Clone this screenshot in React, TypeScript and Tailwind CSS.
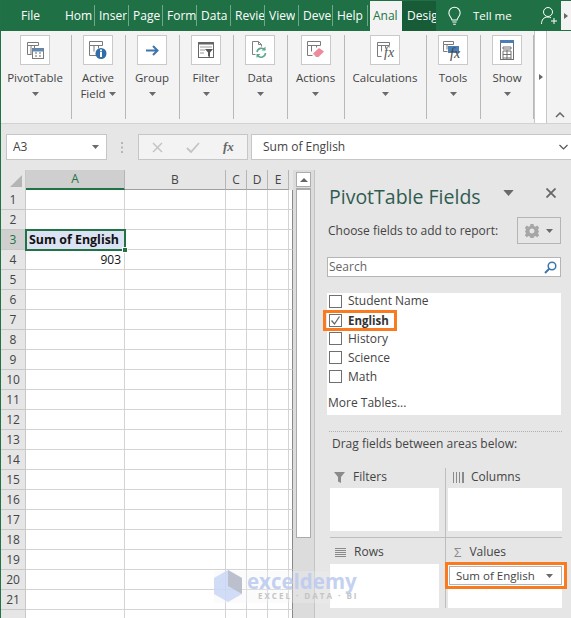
import React from "react";

const font = { fontFamily: '"Open Sans", "Noto Sans", sans-serif' };

const Caret = ({ className = "" }: { className?: string }) => (
  <svg width="7" height="4" viewBox="0 0 7 4" className={className}><path d="M0 0h7L3.5 4z" fill="#6a6a6a" /></svg>
);

const tabs = [
  { t: "File", w: "w-[60px]", pl: "pl-[21px]" },
  { t: "Hom", w: "w-[35px]", pl: "pl-[5px]" },
  { t: "Inser", w: "w-[34px]", pl: "pl-[4px]" },
  { t: "Page", w: "w-[34px]", pl: "pl-[4px]" },
  { t: "Form", w: "w-[34px]", pl: "pl-[4px]" },
  { t: "Data", w: "w-[34px]", pl: "pl-[4px]" },
  { t: "Revie", w: "w-[34px]", pl: "pl-[4px]" },
  { t: "View", w: "w-[34px]", pl: "pl-[4px]" },
  { t: "Deve", w: "w-[34px]", pl: "pl-[4px]" },
  { t: "Help", w: "w-[35px]", pl: "pl-[4px]" },
];

const IconPivot = () => (
  <svg width="18" height="18" viewBox="0 0 18 18" fill="none">
    <path d="M1.5 1.5h11v3h-11zM1.5 4.5v9h4M5 4.500v9M8.500 4.500v3" stroke="#7a7a7a" />
    <rect x="6.500" y="7.500" width="11" height="10" fill="#fff" stroke="#7a7a7a" />
    <rect x="6.500" y="7.500" width="11" height="3" fill="#5f8ab8" />
    <path d="M9 12h2M13 12h2M9 15h2M13 15h2" stroke="#666" />
  </svg>
);
const IconActive = () => (
  <svg width="18" height="18" viewBox="0 0 18 18" fill="none">
    <path d="M.5.500h13v4H.5zM.5 4.500v10h7M5 4.500v6M9.500 4.500v3" stroke="#7a7a7a" />
    <circle cx="12" cy="12.500" r="5.500" fill="#2f6ea8" />
    <rect x="11" y="11" width="2" height="5" fill="#fff" />
    <rect x="11" y="8.500" width="2" height="1.800" fill="#fff" />
  </svg>
);
const IconGroup = () => (
  <svg width="13" height="11" viewBox="0 0 13 11" fill="none">
    <path d="M0 5.500h11M7 1l4.500 4.500L7 10" stroke="#3f75ad" strokeWidth="2" />
  </svg>
);
const IconFilter = () => (
  <svg width="16" height="16" viewBox="0 0 16 16" fill="none">
    <rect x=".5" y=".5" width="15" height="15" fill="#fff" stroke="#666" />
    <rect x="0" y="0" width="16" height="2.500" fill="#666" />
    <path d="M2 5h12M2 8h5M2 11h4" stroke="#9a9a9a" />
    <path d="M7 7h8l-3 3.500V15l-2-.8v-3.700z" fill="#555" />
  </svg>
);
const IconData = () => (
  <svg width="18" height="19" viewBox="0 0 18 19" fill="none">
    <path d="M4.500 13.500H1.500v-13h6l3 3v2M7.500.5v3h3" stroke="#808080" />
    <path d="M6 11a4.500 4.500 0 0 1 8-2M14.500 12a4.500 4.500 0 0 1-8 2.500" stroke="#5fa690" strokeWidth="1.600" />
    <path d="M14.500 5.500v4h-4zM5.500 17v-4h4z" fill="#5fa690" />
  </svg>
);
const IconActions = () => (
  <svg width="18" height="18" viewBox="0 0 18 18" fill="none">
    <path d="M.5.500h13v4H.5zM.5 4.500v10h5M4.500 4.500v6M9.500 4.500v2" stroke="#7a7a7a" />
    <path d="M6 12.500 12 7l5 3.500-5.500 5.500H9z" fill="#ee8a9b" />
    <path d="M6 12.500 9 16" stroke="#d9d9d9" />
  </svg>
);
const IconCalc = () => (
  <div className="relative w-[16px] h-[16px]">
    <svg width="13" height="15" viewBox="0 0 13 15" fill="none" className="absolute left-0 top-0">
      <path d="M.5.500h12v3H.5zM.5 3.500v11h4M4.500 3.500v6M8.500 3.500v3" stroke="#7a7a7a" />
    </svg>
    <span className="absolute left-[7px] top-[4px] text-[14px] leading-[14px] italic text-[#555]" style={{ fontFamily: '"Liberation Serif", serif' }}>fx</span>
  </div>
);
const IconTools = () => (
  <div className="relative w-[16px] h-[16px]">
    <svg width="16" height="12" viewBox="0 0 16 12" fill="none" className="absolute -left-[2px] -top-[1px]">
      <path d="M.5.500h10v3H.5zM.5 3.500v7h4M4 3.500v5" stroke="#7a7a7a" />
      <rect x="5" y="5" width="11" height="7" fill="#4a7eb5" />
    </svg>
    <span className="absolute left-[5px] top-[5px] text-[14px] leading-[14px] italic text-[#444]" style={{ fontFamily: '"Liberation Serif", serif' }}>fx</span>
  </div>
);
const IconShow = () => (
  <svg width="14" height="20" viewBox="0 0 14 20" fill="none">
    <rect x=".5" y=".5" width="13" height="19" fill="#fff" stroke="#707070" />
    <rect x="0" y="0" width="14" height="3" fill="#4a7eb5" />
    <path d="M3 7h8v2H3zM3 11h8M3 14.500h8M3 18h8M7 10v9M3 11v8M11 11v8" stroke="#707070" />
  </svg>
);

const groups: { w: string; label: string; second?: string; icon: React.ReactNode; extra?: string }[] = [
  { w: "w-[71px]", label: "PivotTable", icon: <IconPivot />, extra: "pr-[2px]" },
  { w: "w-[54px]", label: "Active", second: "Field", icon: <IconActive />, extra: "pr-px" },
  { w: "w-[54px]", label: "Group", icon: <IconGroup />, extra: "pr-px" },
  { w: "w-[54px]", label: "Filter", icon: <IconFilter />, extra: "pr-px" },
  { w: "w-[54px]", label: "Data", icon: <IconData />, extra: "pr-px" },
  { w: "w-[57px]", label: "Actions", icon: <IconActions />, extra: "pr-px" },
  { w: "w-[82px]", label: "Calculations", icon: <IconCalc />, extra: "pr-px" },
  { w: "w-[54px]", label: "Tools", icon: <IconTools />, extra: "pr-px" },
  { w: "w-[53px]", label: "Show", icon: <IconShow /> },
];

const rows = Array.from({ length: 22 }, (_, i) => i + 1);

const Check = ({ checked = false }: { checked?: boolean }) => (
  <span className="w-[13px] h-[13px] border border-[#6f6f6f] bg-white flex items-center justify-center shrink-0">
    {checked && (
      <svg width="11" height="11" viewBox="0 0 11 11" fill="none"><path d="M1.500 5.500 4.500 9 9.500 1.500" stroke="#666" strokeWidth="1.300" /></svg>
    )}
  </span>
);

const Field = ({ label, h = "h-[19px]" }: { label: string; h?: string }) => (
  <div className={`${h} pl-[2px] flex items-center gap-[6px] text-[12px] text-[#444]`}>
    <Check />
    <span>{label}</span>
  </div>
);

export default function App() {
  return (
    <div className="w-[571px] h-[618px] overflow-hidden relative bg-[#e6e6e6] border-l border-[#217346]" style={font}>
      {/* Title tabs */}
      <div className="h-[31px] bg-[#1f7145] flex items-stretch -ml-px text-[12px] text-white">
        {tabs.map((t, i) => (
          <div key={t.t} className={`${t.w} ${t.pl} h-[31px] flex items-center overflow-hidden whitespace-nowrap relative`}>
            <span className="overflow-hidden">{t.t}</span>
            {i > 0 && <span className="absolute right-0 top-[5px] h-[21px] w-px bg-[#6fa88a]" />}
          </div>
        ))}
        <div className="w-[2px]" />
        <div className="w-[32px] mt-px bg-[#f3f3f3] text-[#217346] pl-[3px] flex items-center overflow-hidden">Anal</div>
        <div className="w-[34px] mt-px bg-[#185c37] pl-[5px] flex items-center overflow-hidden">Desig</div>
        <div className="w-[12px]" />
        <svg width="13" height="20" viewBox="0 0 15 21" fill="none" className="self-center">
          <path d="M4.500 15C4 12 1 10.500 1 7a6.500 6.500 0 0 1 13 0c0 3.500-3 5-3.500 8zM5 17.500h5M6 20h3" stroke="#fff" strokeWidth="1.200" />
        </svg>
        <div className="w-[12px]" />
        <div className="w-[42px] flex items-center whitespace-nowrap text-[11.5px]">Tell me</div>
        <div className="w-[26px]" />
        <svg width="17" height="19" viewBox="0 0 17 19" fill="none" className="self-center">
          <circle cx="7" cy="6" r="4.500" stroke="#fff" />
          <path d="M.5 18c0-4 2-7 6.500-7 1 0 2 .2 3 .8M13 12v6M10 15h6" stroke="#fff" />
        </svg>
        <div className="flex-1 ml-[3px] mt-px mb-px bg-[#f3f3f3] flex items-center pl-[3px]"><span className="border-y-[3px] border-y-transparent border-l-[4px] border-l-[#666]" /></div>
      </div>

      {/* Ribbon */}
      <div className="h-[93px] bg-[#f3f3f3] border-b border-[#d2d2d2] flex pt-[4px] text-[11.5px] text-[#444] relative">
        {groups.map((g) => (
          <div key={g.label} className={`${g.w} ${g.extra ?? ""} h-[84px] border-r border-[#b8b8b8] flex flex-col items-center`}>
            <div className="w-[30px] h-[30px] border border-[#c9c9c9] bg-white flex items-center justify-center">{g.icon}</div>
            <div className="mt-[5px] leading-[16px] text-center whitespace-nowrap">{g.label}</div>
            {g.second ? (
              <div className="leading-[16px] flex items-center gap-[3px]">{g.second}<Caret /></div>
            ) : (
              <Caret className="mt-[6px]" />
            )}
          </div>
        ))}
        <div className="w-[13px] h-[92px] -mt-[4px] border-x border-[#c6c6c6] bg-white flex items-center justify-center">
          <span className="border-y-[3px] border-y-transparent border-l-[4px] border-l-[#666]" />
        </div>
        <svg width="10" height="6" viewBox="0 0 10 6" fill="none" className="absolute left-[554px] top-[81px]"><path d="M1 5l4-4 4 4" stroke="#666" strokeWidth="1.500" /></svg>
      </div>

      {/* Formula bar */}
      <div className="h-[39px] flex items-center -ml-px pl-[6px] pt-[7px] text-[12px] text-[#444]">
        <div className="w-[101px] h-[26px] border border-[#c6c6c6] bg-white flex items-center justify-between pl-[6px] pr-[7px]">
          <span>A3</span><Caret />
        </div>
        <div className="w-[31px] flex justify-center text-[#aaa]">
          <svg width="3" height="11" viewBox="0 0 3 11"><path d="M0 0h2v2H0zM0 4.500h2v2H0zM0 9h2v2H0z" fill="#b5b5b5" /></svg>
        </div>
        <div className="w-[110px] h-[26px] border border-[#c6c6c6] bg-[#f3f3f3] flex items-center pl-[13px] gap-[23px]">
          <svg width="11" height="11" viewBox="0 0 11 11" fill="none"><path d="M1 1l9 9M10 1l-9 9" stroke="#c4c4c4" strokeWidth="1.500" /></svg>
          <svg width="14" height="11" viewBox="0 0 14 11" fill="none"><path d="M1 6l4 4 8-9" stroke="#c4c4c4" strokeWidth="1.800" /></svg>
          <span className="text-[13px] italic font-bold text-[#666]" style={{ fontFamily: '"Liberation Serif", serif' }}>fx</span>
        </div>
        <div className="w-[3px]" />
        <div className="flex-1 h-[26px] border border-[#c6c6c6] border-r-0 bg-white flex items-center justify-between pl-[11px] pr-[3px]">
          <span>Sum of English</span>
          <svg width="9" height="6" viewBox="0 0 9 6" fill="none"><path d="M.5 1l4 4 4-4" stroke="#555" strokeWidth="1.200" /></svg>
        </div>
      </div>

      {/* Main */}
      <div className="flex h-[455px] pt-[7px] text-[12px]">
        {/* Sheet */}
        <div className="w-[292px] shrink-0 overflow-hidden">
          <div className="flex h-[20px] bg-[#e6e6e6] text-[#444]">
            <div className="w-[25px] relative border-r border-[#c8c8c8]">
              <span className="absolute right-[3px] bottom-[3px] border-b-[12px] border-b-[#b5b5b5] border-l-[12px] border-l-transparent" />
            </div>
            <div className="w-[99px] bg-[#cfcfcf] border-r border-[#b5b5b5] border-b-2 border-b-[#217346] flex items-center justify-center text-[#217346]">A</div>
            <div className="w-[101px] border-r border-[#b5b5b5] border-b border-b-[#9f9f9f] flex items-center justify-center">B</div>
            <div className="w-[21px] border-r border-[#b5b5b5] border-b border-b-[#9f9f9f] flex items-center justify-center">C</div>
            <div className="w-[21px] border-r border-[#b5b5b5] border-b border-b-[#9f9f9f] flex items-center justify-center">D</div>
            <div className="w-[21px] border-r border-[#b5b5b5] border-b border-b-[#9f9f9f] flex items-center justify-center">E</div>
          </div>
          {rows.map((r) => (
            <div key={r} className="flex h-[20px] bg-white">
              <div className={`w-[25px] shrink-0 pt-px border-r border-b border-[#c8c8c8] flex items-center justify-center ${r === 3 ? "bg-[#cfcfcf] text-[#217346]" : "bg-[#e6e6e6] text-[#444]"}`}>{r < 22 ? r : ""}</div>
              {r === 3 ? (
                <div className="w-[101px] -ml-px -mr-px shrink-0 relative z-10 bg-[#dbe2f3] border-2 border-[#217346] -mt-px h-[22px] text-[12.4px] font-bold text-[#111] flex items-center pl-[2px] whitespace-nowrap">
                  Sum of English
                  <span className="absolute -right-[4px] -bottom-[4px] w-[6px] h-[6px] bg-[#217346] border border-white" />
                </div>
              ) : (
                <div className="w-[99px] shrink-0 pt-px border-r border-b border-[#d4d4d4] flex items-center justify-end pr-[3px] text-[#111]">{r === 4 ? "903" : ""}</div>
              )}
              <div className="w-[101px] shrink-0 border-r border-b border-[#d4d4d4]" />
              <div className="w-[21px] shrink-0 border-r border-b border-[#d4d4d4]" />
              <div className="w-[21px] shrink-0 border-r border-b border-[#d4d4d4]" />
              <div className="w-[21px] shrink-0 border-r border-b border-[#d4d4d4]" />
              <div className="flex-1 border-b border-r border-[#d4d4d4] border-r-[#8a8a8a]" />
            </div>
          ))}
        </div>

        {/* Scrollbar */}
        <div className="w-[22px] shrink-0 bg-[#dcdcdc] border-r border-[#c4c4c4] pl-[3px] pr-[4px] pt-[2px] flex flex-col">
          <div className="w-[15px] h-[15px] bg-white border border-[#ababab] flex items-center justify-center">
            <span className="border-x-[4px] border-x-transparent border-b-[4px] border-b-[#666]" />
          </div>
          <div className="w-[15px] h-[350px] bg-white border border-[#ababab] border-t-2 mt-px" />
        </div>

        {/* Panel */}
        <div className="flex-1 pl-[13px] pt-[12px] text-[#444] flex flex-col">
          <div className="h-[30px] flex items-center relative">
            <span className="ml-px text-[19.5px] text-[#2f5c50] leading-none whitespace-nowrap">PivotTable Fields</span>
            <Caret className="absolute left-[177px] top-[9px] scale-150" />
            <svg width="10" height="10" viewBox="0 0 10 10" fill="none" className="absolute left-[218px] top-[6px]"><path d="M.5.500l9 9M9.500.5l-9 9" stroke="#666" strokeWidth="1.800" /></svg>
          </div>
          <div className="h-[33px] mt-[2px] flex items-center justify-between pr-[10px]">
            <span className="text-[12px] text-[#444] whitespace-nowrap">Choose fields to add to report:</span>
            <div className="w-[44px] h-[27px] border border-[#b5b5b5] flex items-center justify-center gap-[7px]">
              <svg width="14" height="14" viewBox="0 0 14 14"><path fill="#a6a6a6" fillRule="evenodd" d="M5.500 0h3l.4 2 1.500.7L12.200 1.500l2 2.200-1.200 1.700.6 1.600L15 7.500v0l-1.400.500-.6 1.600 1.200 1.700-2 2-1.800-1.200-1.500.6-.4 2h-3l-.4-2-1.500-.6L1.800 13.300l-2-2 1.200-1.700-.6-1.600L-1 7.500l1.400-.5.600-1.600-1.200-1.700 2-2.200 1.800 1.200 1.500-.7zM7 4.500a2.500 2.500 0 1 0 0 5 2.500 2.500 0 0 0 0-5z" /></svg>
              <Caret />
            </div>
          </div>
          <div className="h-[20px] mt-[10px] -ml-px mr-[10px] border border-[#b5b5b5] bg-white flex items-center justify-between pl-[1px] pr-[3px] text-[12px] text-[#666]">
            <span>Search</span>
            <svg width="13" height="13" viewBox="0 0 13 13" fill="none"><circle cx="8" cy="5" r="3.800" stroke="#3f75ad" strokeWidth="1.500" /><path d="M5.500 7.500 1 12" stroke="#3f75ad" strokeWidth="2" /></svg>
          </div>
          <div className="h-[122px] mt-[16px] -ml-px mr-[10px] bg-white flex flex-col">
            <Field label="Student Name" h="h-[16px]" />
            <div className="h-[21px] mt-px -ml-[4px] w-[74px] shrink-0 border-[3px] border-[#f97a1f] flex items-center pl-[3px] gap-[6px] text-[11.5px] font-bold text-[#333]">
              <Check checked />
              <span>English</span>
            </div>
            <div className="-mt-[2px]"><Field label="History" /></div>
            <Field label="Science" />
            <Field label="Math" />
            <div className="mt-[9px] pl-[1px] leading-[16px] text-[#444]">More Tables...</div>
          </div>
          <div className="mt-[16px] ml-px mr-[9px] border-t border-dotted border-[#b0b0b0]" />
          <div className="mt-[3px] ml-[4px] h-[18px] flex items-center">Drag fields between areas below:</div>
          <div className="mt-[15px] ml-[2px] grid grid-cols-[116px_116px] grid-rows-[70px_70px] h-[140px]">
            <div className="border-r border-b border-[#bdbdbd] flex flex-col">
              <div className="h-[18px] pl-[4px] flex items-center gap-[8px]">
                <svg width="11" height="11" viewBox="0 0 11 11"><path d="M0 0h11L7 5v6L4 9.500V5z" fill="#8a8a8a" /></svg>
                <span>Filters</span>
              </div>
              <div className="h-[43px] w-[109px] mt-[2px] bg-white" />
            </div>
            <div className="border-b border-[#bdbdbd] pl-[2px] flex flex-col">
              <div className="h-[18px] pl-[5px] flex items-center gap-[7px]">
                <svg width="11" height="11" viewBox="0 0 11 11"><path d="M0 0h1v11H0zM3 0h1v11H3zM6 0h1v11H6zM9 0h2v11H9z" fill="#8a8a8a" /></svg>
                <span>Columns</span>
              </div>
              <div className="h-[43px] mt-[2px] bg-white" />
            </div>
            <div className="border-r border-[#bdbdbd] flex flex-col pt-[5px]">
              <div className="h-[18px] pl-[5px] flex items-center gap-[8px]">
                <svg width="11" height="9" viewBox="0 0 11 9"><path d="M0 0h11v1H0zM0 2h11v1H0zM0 4h11v1H0zM0 6h11v1H0zM0 8h11v1H0z" fill="#8a8a8a" /></svg>
                <span>Rows</span>
              </div>
              <div className="h-[44px] w-[109px] bg-white mt-[3px]" />
            </div>
            <div className="pl-[2px] flex flex-col pt-[5px] relative">
              <div className="h-[18px] pl-[6px] flex items-center gap-[8px]">
                <span className="text-[13px] leading-none text-[#8a8a8a]">Σ</span>
                <span>Values</span>
              </div>
              <div className="h-[44px] bg-white mt-[3px]" />
              <div className="absolute -left-[1px] top-[24px] w-[122px] h-[27px] border-[3px] border-[#f97a1f] bg-white pl-px pt-px pb-px pr-[2px]">
                <div className="h-full border border-[#b5b5b5] flex items-center justify-between pl-[6px] pr-[8px] text-[11.5px] text-[#444]">
                  <span>Sum of English</span><Caret />
                </div>
              </div>
            </div>
          </div>
        </div>
      </div>

      {/* Watermark */}
      <div className="absolute left-[213px] top-[571px] w-[117px] h-[32px] bg-[#f3f3f3]/30 pointer-events-none" />
      <div className="absolute left-[213px] top-[570px] w-[150px] h-[32px] pointer-events-none">
        <div className="absolute left-0 top-0 w-[30px] h-[32px]">
          <svg width="28" height="32" viewBox="0 0 28 32"><path d="M14 0l14 8v16l-14 8-14-8V8z" fill="#c9d6f5" opacity=".85" /><path d="M14 0l14 8v16l-14-8z" fill="#a9a9a9" opacity=".55" /></svg>
        </div>
        <div className="absolute left-[33px] top-[-2px] text-[20.5px] leading-[26px] font-bold text-[#bccbf0]/90 whitespace-nowrap">exceldemy</div>
        <div className="absolute left-[44px] top-[20px] text-[8px] leading-[12px] tracking-[2px] font-bold text-[#c4c4c4] whitespace-nowrap">EXCEL · DATA · BI</div>
      </div>
    </div>
  );
}
